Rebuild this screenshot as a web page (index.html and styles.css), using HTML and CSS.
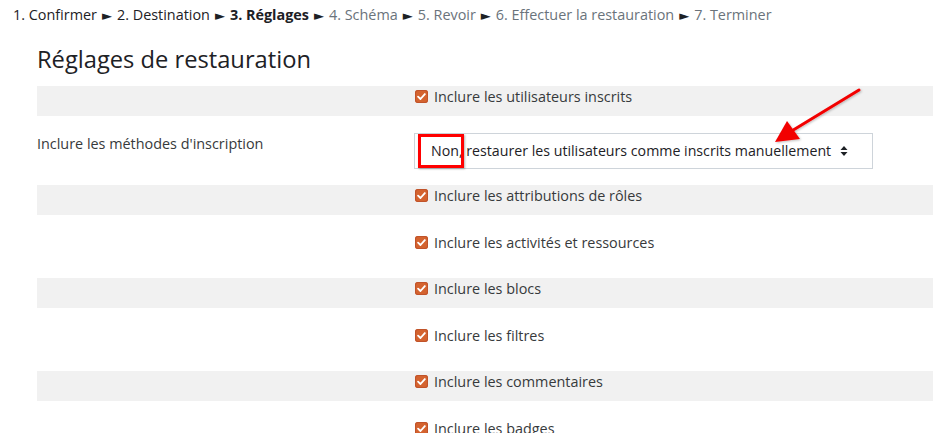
FILE: index.html
```html
<!DOCTYPE html>
<html lang="fr">
<head>
<meta charset="utf-8">
<title>Réglages de restauration</title>
<link rel="stylesheet" href="styles.css">
</head>
<body>
<div class="steps">
  <span class="done">1. Confirmer</span><span class="sep">►</span><span class="done">2. Destination</span><span class="sep">►</span><span class="current">3. Réglages</span><span class="sep">►</span><span class="todo">4. Schéma</span><span class="sep">►</span><span class="todo">5. Revoir</span><span class="sep">►</span><span class="todo">6. Effectuer la restauration</span><span class="sep">►</span><span class="todo">7. Terminer</span>
</div>
<h2 class="title">Réglages de restauration</h2>
<div class="form">
  <div class="row odd">
    <div class="label"></div>
    <div class="field"><span class="cb"><svg viewBox="0 0 14 14" width="14" height="14"><path d="M3.3 7.2 L5.9 9.7 L10.6 4.4" fill="none" stroke="#fff" stroke-width="2" stroke-linecap="round" stroke-linejoin="round"/></svg></span>Inclure les utilisateurs inscrits</div>
  </div>
  <div class="row select-row">
    <div class="label">Inclure les méthodes d'inscription</div>
    <div class="field">
      <div class="select">
        <span>Non, restaurer les utilisateurs comme inscrits manuellement</span>
        <svg class="caret" viewBox="0 0 8 12" width="8" height="12"><path d="M4 1 L7.5 5 L0.5 5 Z M4 11 L7.5 7 L0.5 7 Z" fill="#1d2125"/></svg>
      </div>
      <div class="highlight"></div>
    </div>
  </div>
  <div class="row odd">
    <div class="label"></div>
    <div class="field"><span class="cb"><svg viewBox="0 0 14 14" width="14" height="14"><path d="M3.3 7.2 L5.9 9.7 L10.6 4.4" fill="none" stroke="#fff" stroke-width="2" stroke-linecap="round" stroke-linejoin="round"/></svg></span>Inclure les attributions de rôles</div>
  </div>
  <div class="row">
    <div class="label"></div>
    <div class="field"><span class="cb"><svg viewBox="0 0 14 14" width="14" height="14"><path d="M3.3 7.2 L5.9 9.7 L10.6 4.4" fill="none" stroke="#fff" stroke-width="2" stroke-linecap="round" stroke-linejoin="round"/></svg></span>Inclure les activités et ressources</div>
  </div>
  <div class="row odd">
    <div class="label"></div>
    <div class="field"><span class="cb"><svg viewBox="0 0 14 14" width="14" height="14"><path d="M3.3 7.2 L5.9 9.7 L10.6 4.4" fill="none" stroke="#fff" stroke-width="2" stroke-linecap="round" stroke-linejoin="round"/></svg></span>Inclure les blocs</div>
  </div>
  <div class="row">
    <div class="label"></div>
    <div class="field"><span class="cb"><svg viewBox="0 0 14 14" width="14" height="14"><path d="M3.3 7.2 L5.9 9.7 L10.6 4.4" fill="none" stroke="#fff" stroke-width="2" stroke-linecap="round" stroke-linejoin="round"/></svg></span>Inclure les filtres</div>
  </div>
  <div class="row odd">
    <div class="label"></div>
    <div class="field"><span class="cb"><svg viewBox="0 0 14 14" width="14" height="14"><path d="M3.3 7.2 L5.9 9.7 L10.6 4.4" fill="none" stroke="#fff" stroke-width="2" stroke-linecap="round" stroke-linejoin="round"/></svg></span>Inclure les commentaires</div>
  </div>
  <div class="row">
    <div class="label"></div>
    <div class="field"><span class="cb"><svg viewBox="0 0 14 14" width="14" height="14"><path d="M3.3 7.2 L5.9 9.7 L10.6 4.4" fill="none" stroke="#fff" stroke-width="2" stroke-linecap="round" stroke-linejoin="round"/></svg></span>Inclure les badges</div>
  </div>
</div>
<svg class="annot-arrow" width="933" height="433" viewBox="0 0 933 433">
  <defs>
    <filter id="sh" x="-20%" y="-20%" width="140%" height="140%">
      <feDropShadow dx="1" dy="1" stdDeviation="1" flood-color="#000" flood-opacity="0.25"/>
    </filter>
  </defs>
  <g filter="url(#sh)">
    <line x1="859" y1="90" x2="790" y2="132" stroke="#f20000" stroke-width="3" stroke-linecap="round"/>
    <path d="M775 142 L787 121 L800 139 Z" fill="#f20000"/>
  </g>
</svg>
</body>
</html>
```

FILE: styles.css
```css
html, body {
  margin: 0;
  padding: 0;
  background: #fff;
}
body {
  font-family: "Open Sans", "DejaVu Sans", sans-serif;
  color: #373a3c;
  width: 933px;
  height: 433px;
  overflow: hidden;
  position: relative;
}
.steps {
  padding: 6px 0 0 13px;
  font-size: 14.4px;
  line-height: 18px;
  white-space: nowrap;
  color: #1d2125;
}
.steps .sep {
  font-size: 13px;
  margin: 0 5px;
  color: #1d2125;
}
.steps .current {
  font-weight: bold;
}
.steps .todo {
  color: #6a737b;
}
.title {
  margin: 21px 0 0 37px;
  font-size: 23.7px;
  font-weight: normal;
  line-height: 28px;
  color: #1d2125;
}
.form {
  margin: 13px 0 0 37px;
  font-size: 14.4px;
}
.row {
  display: grid;
  grid-template-columns: 377px 1fr;
  height: 30px;
  margin-bottom: 16.5px;
}
.row.odd {
  background: #f1f1f1;
}
.label {
  line-height: 22px;
}
.field {
  display: flex;
  align-items: flex-start;
  line-height: 22px;
  position: relative;
}
.cb {
  width: 13px;
  height: 13px;
  margin: 4px 6px 0 1px;
  border-radius: 3px;
  background: #d4632f;
  box-shadow: inset 0 0 0 1px #c0532a;
  display: inline-flex;
  align-items: center;
  justify-content: center;
  flex: none;
}
.cb svg {
  width: 13px;
  height: 13px;
}
.select-row {
  height: 36px;
}
.select-row .field {
  display: block;
}
.select {
  height: 34px;
  border: 1px solid #ced4da;
  display: flex;
  align-items: center;
  padding-left: 16px;
  box-sizing: content-box;
  width: 441px;
  color: #1d2125;
  font-size: 14.2px;
}
.select span {
  flex: 1;
  white-space: nowrap;
}
.caret {
  margin-right: 24px;
  flex: none;
}
.highlight {
  position: absolute;
  left: 4px;
  top: 1px;
  width: 40px;
  height: 28px;
  border: 3px solid #f00;
  box-shadow: 1px 1px 2px rgba(0,0,0,0.3);
}
.annot-arrow {
  position: absolute;
  left: 0;
  top: 0;
  pointer-events: none;
}
```
